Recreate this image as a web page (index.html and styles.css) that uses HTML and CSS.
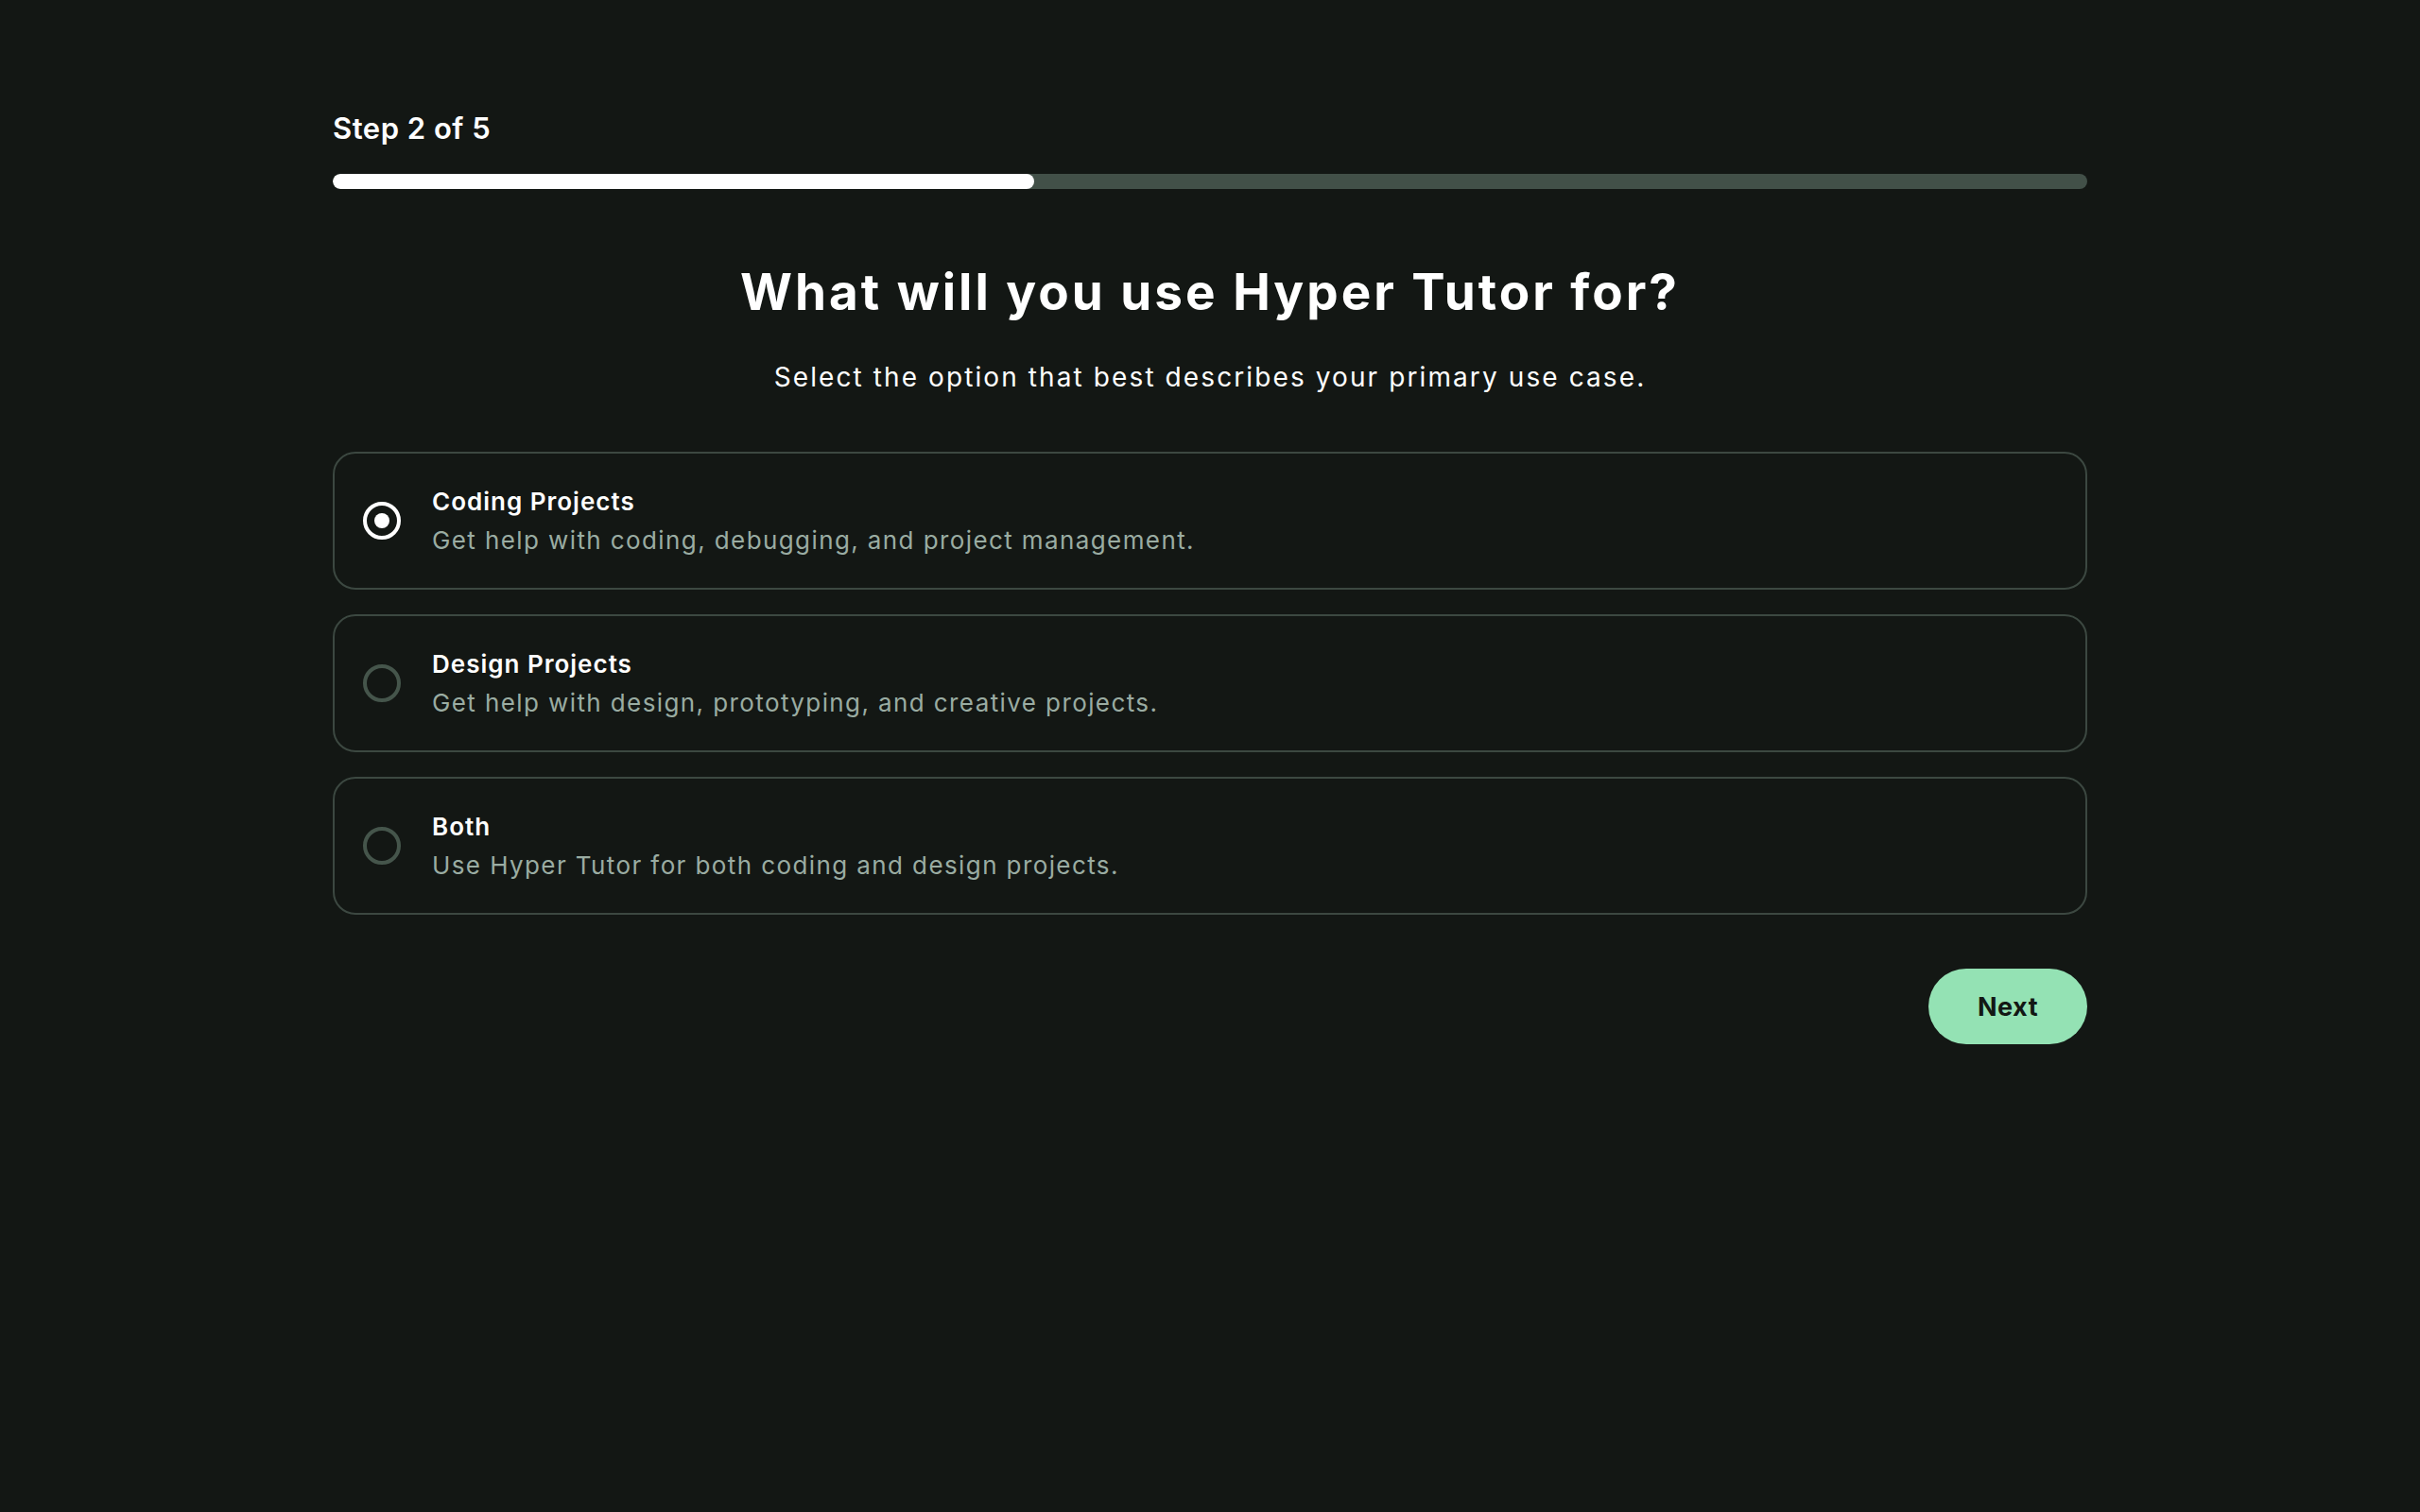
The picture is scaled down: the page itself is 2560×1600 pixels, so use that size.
FILE: index.html
```html
<!DOCTYPE html>
<html lang="en">
<head>
<meta charset="utf-8">
<title>Hyper Tutor – Step 2 of 5</title>
<link rel="stylesheet" href="styles.css">
</head>
<body>
<main class="onboarding">
  <div class="step-label">Step 2 of 5</div>
  <div class="progress"><div class="progress-fill" style="width: 40%"></div></div>

  <h1 class="title">What will you use Hyper Tutor for?</h1>
  <p class="subtitle">Select the option that best describes your primary use case.</p>

  <div class="options">
    <label class="option selected">
      <span class="radio"><span class="dot"></span></span>
      <span class="option-text">
        <span class="option-title">Coding Projects</span>
        <span class="option-desc">Get help with coding, debugging, and project management.</span>
      </span>
    </label>
    <label class="option">
      <span class="radio"></span>
      <span class="option-text">
        <span class="option-title">Design Projects</span>
        <span class="option-desc">Get help with design, prototyping, and creative projects.</span>
      </span>
    </label>
    <label class="option">
      <span class="radio"></span>
      <span class="option-text">
        <span class="option-title">Both</span>
        <span class="option-desc">Use Hyper Tutor for both coding and design projects.</span>
      </span>
    </label>
  </div>

  <div class="actions">
    <button class="next-btn">Next</button>
  </div>
</main>
</body>
</html>
```

FILE: styles.css
```css
* { box-sizing: border-box; }

html, body {
  margin: 0;
  padding: 0;
  background: #131714;
  color: #ffffff;
  font-family: Inter, "Noto Sans", "Liberation Sans", sans-serif;
  min-height: 1600px;
}

.onboarding {
  width: 1856px;
  margin: 0 auto;
  padding-top: 116px;
  display: flex;
  flex-direction: column;
}

.step-label {
  font-size: 31px;
  line-height: 40px;
  font-weight: 600;
  letter-spacing: 0.5px;
}

.progress {
  margin-top: 28px;
  height: 16px;
  border-radius: 8px;
  background: #425048;
  overflow: hidden;
}

.progress-fill {
  height: 100%;
  background: #ffffff;
  border-radius: 8px;
}

.title {
  margin: 77px 0 0;
  text-align: center;
  font-size: 53px;
  line-height: 64px;
  font-weight: 700;
  letter-spacing: 3px;
}

.subtitle {
  margin: 38px 0 0;
  text-align: center;
  font-size: 28px;
  line-height: 40px;
  font-weight: 400;
  letter-spacing: 2.1px;
}

.options {
  margin-top: 59px;
  display: flex;
  flex-direction: column;
  gap: 26px;
}

.option {
  display: flex;
  align-items: center;
  height: 146px;
  padding: 0 30px;
  border: 2px solid #3c4841;
  border-radius: 24px;
  cursor: pointer;
}

.radio {
  flex: none;
  width: 40px;
  height: 40px;
  border: 4px solid #45554b;
  border-radius: 50%;
  display: flex;
  align-items: center;
  justify-content: center;
}

.option.selected .radio {
  border-color: #ffffff;
}

.dot {
  width: 16px;
  height: 16px;
  border-radius: 50%;
  background: #ffffff;
}

.option-text {
  margin-left: 33px;
  display: flex;
  flex-direction: column;
  gap: 1px;
}

.option-title {
  font-size: 26px;
  line-height: 40px;
  font-weight: 600;
  color: #ffffff;
  letter-spacing: 1px;
}

.option-desc {
  font-size: 26px;
  line-height: 40px;
  color: #9aaca2;
  letter-spacing: 1.4px;
}

.actions {
  margin-top: 57px;
  display: flex;
  justify-content: flex-end;
}

.next-btn {
  width: 168px;
  height: 80px;
  border: none;
  border-radius: 40px;
  background: #94e2b4;
  color: #131714;
  font-family: inherit;
  font-size: 27px;
  font-weight: 700;
  letter-spacing: 0.5px;
  cursor: pointer;
}
```
